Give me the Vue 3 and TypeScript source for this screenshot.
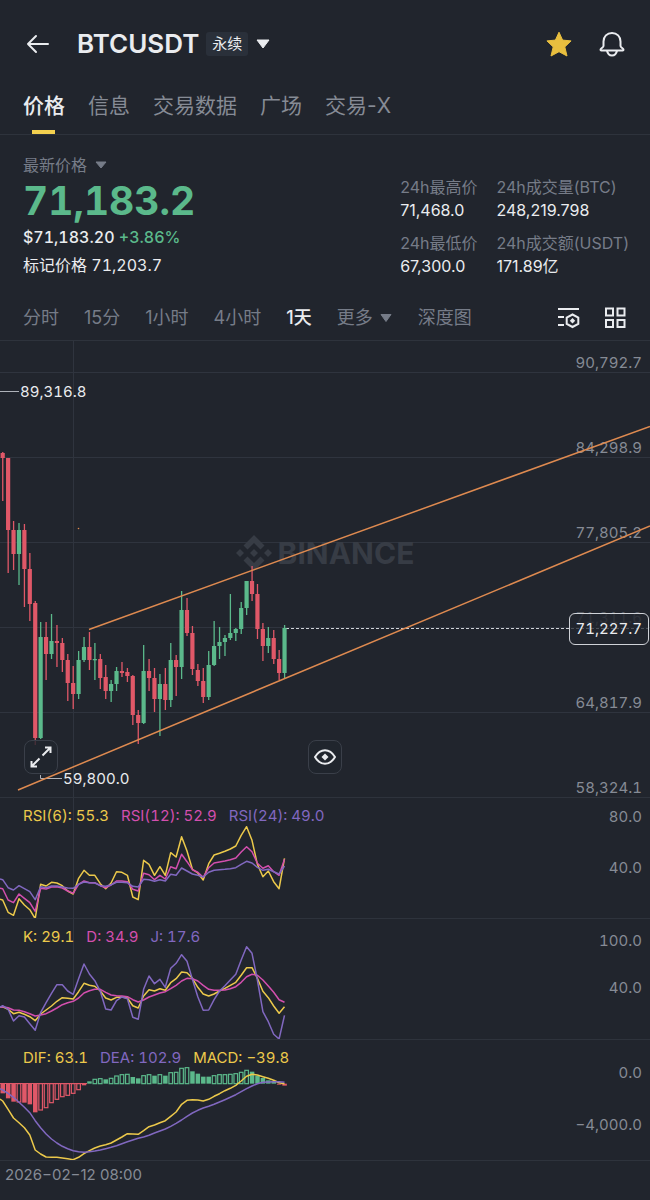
<script setup lang="ts">
import { ref } from 'vue'

interface Candle {
  x: number
  high: number
  low: number
  top: number
  bottom: number
  up: boolean
}
interface Bar {
  x: number
  y: number
  h: number
  up: boolean
  filled: boolean
}

const tabs: string[] = ['价格', '信息', '交易数据', '广场', '交易-X']
const activeTab = ref('价格')
const intervals: string[] = ['分时', '15分', '1小时', '4小时', '1天']
const activeInterval = ref('1天')

const stats: { label: string; value: string }[] = [
  { label: '24h最高价', value: '71,468.0' },
  { label: '24h成交量(BTC)', value: '248,219.798' },
  { label: '24h最低价', value: '67,300.0' },
  { label: '24h成交额(USDT)', value: '171.89亿' },
]

const STEP = 5.42
const xAt = (i: number): number => 2.7 + STEP * i

/* direction, high, low, body top, body bottom */
const rawCandles: [number, number, number, number, number][] = [
  [0, 111, 160, 112, 117], [0, 117, 232, 117, 189], [0, 180, 229, 189, 213], [1, 182, 244, 189, 213],
  [0, 183, 266, 189, 228], [0, 212, 280, 228, 263], [0, 260, 404, 262, 397], [1, 281, 398, 296, 397],
  [0, 281, 339, 296, 313], [1, 273, 318, 300, 313], [0, 284, 326, 300, 302], [0, 297, 331, 302, 319],
  [0, 313, 360, 319, 342], [0, 325, 368, 342, 353], [1, 310, 358, 319, 353], [1, 296, 321, 306, 319],
  [0, 291, 329, 306, 319], [1, 302, 339, 318, 319], [0, 313, 348, 318, 337], [0, 324, 358, 336, 350],
  [1, 339, 361, 343, 350], [1, 326, 350, 330, 343], [0, 321, 336, 330, 332], [0, 327, 341, 331, 335],
  [0, 334, 384, 335, 374], [0, 369, 403, 374, 382], [1, 304, 383, 330, 382], [0, 318, 350, 330, 337],
  [0, 327, 371, 337, 358], [1, 333, 395, 343, 358], [0, 327, 369, 343, 359], [1, 302, 366, 319, 359],
  [0, 314, 355, 319, 326], [1, 250, 338, 269, 326], [0, 257, 295, 269, 292], [0, 285, 334, 292, 328],
  [0, 323, 345, 329, 340], [0, 327, 362, 340, 356], [1, 310, 359, 324, 356], [1, 280, 325, 305, 324],
  [1, 286, 318, 301, 305], [1, 294, 315, 297, 301], [1, 253, 299, 292, 297], [1, 287, 300, 288, 292],
  [1, 261, 293, 267, 288], [1, 240, 274, 240, 267], [0, 225, 260, 240, 253], [0, 243, 298, 253, 288],
  [0, 282, 320, 288, 305], [1, 286, 312, 297, 305], [0, 289, 323, 297, 318], [0, 309, 339, 318, 332],
  [1, 284, 337, 287, 332],
]
const candles: Candle[] = rawCandles.map(([up, high, low, top, bottom], i) => ({
  x: xAt(i), high, low, top, bottom, up: up === 1,
}))

/* Turns samples, measured in thirds of a pixel, into polyline points. */
function line(samples: number[], lead: number, offset: number): string {
  const pts = samples.map((v, i) => `${xAt(i).toFixed(1)},${(v / 3 + offset).toFixed(1)}`)
  return [`0,${(lead / 3 + offset).toFixed(1)}`, ...pts].join(' ')
}

const rsi = [
  { cls: 'yellow', points: line([297, 334, 343, 293, 312, 326, 353, 250, 255, 244, 246, 254, 270, 279, 232, 208, 223, 223, 248, 263, 246, 212, 214, 223, 288, 296, 178, 190, 223, 197, 223, 155, 168, 107, 150, 205, 216, 237, 188, 162, 157, 151, 144, 135, 103, 77, 118, 190, 227, 210, 242, 263, 172], 295, 3) },
  { cls: 'pink', points: line([263, 297, 305, 279, 292, 305, 331, 262, 264, 258, 257, 261, 270, 277, 250, 240, 245, 245, 254, 260, 252, 240, 240, 242, 265, 270, 217, 221, 236, 223, 234, 197, 203, 160, 182, 206, 214, 229, 200, 186, 183, 180, 176, 171, 153, 137, 152, 187, 202, 194, 212, 223, 175], 262, 3) },
  { cls: 'purple', points: line([236, 260, 267, 254, 263, 272, 296, 257, 260, 255, 255, 258, 261, 262, 250, 243, 245, 246, 254, 256, 251, 244, 244, 245, 256, 258, 235, 236, 241, 236, 240, 220, 223, 201, 210, 219, 223, 228, 214, 208, 206, 205, 203, 200, 190, 181, 186, 199, 208, 205, 212, 219, 195], 234, 3) },
]
const kdj = [
  { cls: 'yellow', points: line([260, 268, 281, 277, 283, 290, 302, 282, 270, 258, 244, 233, 235, 237, 215, 190, 196, 199, 213, 234, 240, 232, 231, 234, 257, 264, 228, 209, 213, 206, 211, 188, 176, 156, 158, 175, 202, 222, 228, 222, 213, 205, 196, 187, 166, 143, 143, 175, 214, 233, 258, 280, 260], 261, 1) },
  { cls: 'pink', points: line([260, 263, 270, 271, 275, 281, 288, 285, 281, 273, 264, 254, 248, 244, 234, 219, 212, 208, 208, 217, 225, 227, 228, 230, 239, 246, 240, 231, 225, 219, 215, 206, 196, 183, 175, 176, 183, 196, 208, 211, 211, 210, 206, 200, 187, 170, 163, 166, 180, 198, 217, 239, 247], 261, 1) },
  { cls: 'purple', points: line([257, 268, 303, 287, 291, 311, 331, 278, 248, 220, 194, 194, 213, 223, 176, 132, 162, 182, 214, 267, 270, 242, 231, 236, 292, 298, 208, 168, 191, 178, 202, 145, 130, 104, 124, 178, 230, 271, 270, 239, 213, 197, 180, 163, 120, 80, 100, 180, 275, 305, 343, 357, 286], 261, 1) },
]
const macd = [
  { cls: 'yellow', points: line([183, 208, 234, 248, 263, 285, 330, 342, 351, 352, 352, 354, 356, 359, 352, 341, 332, 324, 318, 314, 309, 300, 291, 281, 282, 283, 272, 260, 255, 248, 242, 229, 216, 193, 181, 179, 180, 183, 178, 169, 161, 152, 145, 136, 123, 109, 103, 105, 110, 115, 121, 128, 131], 177, 0) },
  { cls: 'purple', points: line([150, 160, 172, 187, 202, 218, 242, 263, 282, 297, 309, 319, 326, 332, 335, 337, 335, 333, 330, 326, 322, 317, 311, 305, 300, 295, 291, 286, 279, 273, 267, 259, 250, 240, 229, 219, 211, 204, 199, 193, 186, 179, 172, 164, 155, 146, 138, 131, 127, 126, 125, 125, 127], 146, 0) },
]

/* histogram bar ends around the zero level; hollow ones are listed apart */
const barEnds: number[] = [160, 175, 185, 186, 188, 193, 217, 210, 203, 188, 178, 170, 166, 160, 149, 136, 124, 118, 116, 118, 115, 108, 104, 103, 111, 115, 107, 104, 107, 104, 107, 98, 97, 85, 83, 94, 101, 110, 110, 107, 104, 104, 103, 101, 97, 91, 95, 107, 114, 121, 124, 134, 137]
const hollow = new Set<number>([3, 7, 8, 9, 10, 11, 12, 13, 14, 17, 18, 20, 21, 22, 23, 26, 27, 29, 31, 32, 33, 34, 39, 40, 41, 42, 43, 44, 45])
const ZERO = 131
const bars: Bar[] = barEnds.map((end, i) => ({
  x: xAt(i),
  y: Math.min(end, ZERO) / 3,
  h: Math.max(Math.abs(end - ZERO) / 3, 1),
  up: end < ZERO,
  filled: !hollow.has(i),
}))
</script>

<template>
  <div class="page">
    <header class="top">
      <button class="icon" type="button" aria-label="返回">
        <svg width="30" height="26" viewBox="0 0 30 26"><path d="M14 5 6 13l8 8M6 13h20" fill="none" stroke="#eaecef" stroke-width="2" stroke-linecap="round" stroke-linejoin="round" /></svg>
      </button>
      <button class="symbol" type="button">
        <span class="pair">BTCUSDT</span>
        <span class="badge">永续</span>
        <svg width="16" height="10" viewBox="0 0 16 10"><path d="M2 1h12L8 9z" fill="#eaecef" stroke="#eaecef" stroke-linejoin="round" /></svg>
      </button>
      <button class="icon star" type="button" aria-label="收藏">
        <svg width="28" height="28" viewBox="0 0 28 28"><path d="M14 2.200l3.600 7.900 8.500.8-6.300 6 2.200 9.100-8-4.300L6 26l2.200-9.100-6.300-6 8.500-.8z" fill="#e9bf3f" stroke="#e9bf3f" stroke-linejoin="round" /></svg>
      </button>
      <button class="icon" type="button" aria-label="提醒">
        <svg width="28" height="28" viewBox="0 0 28 28"><g fill="none" stroke="#eaecef" stroke-width="2" stroke-linejoin="round"><path d="M14 3c-5 0-8.500 3.500-8.500 8.500V16c0 1.500-3 2.500-3 3.700 0 .5.300.8.800.8h21.400c.5 0 .8-.3.800-.8 0-1.200-3-2.200-3-3.700v-4.500C22.500 6.500 19 3 14 3z" /><path d="M9 20.500c.6 3.300 2.600 5 5 5s4.400-1.700 5-5" /></g></svg>
      </button>
    </header>

    <nav class="tabs">
      <button v-for="t in tabs" :key="t" type="button" :class="{ active: t === activeTab }" @click="activeTab = t">{{ t }}</button>
    </nav>

    <section class="quote">
      <div class="price">
        <button class="kind" type="button">最新价格
          <svg width="12" height="8" viewBox="0 0 12 8"><path d="M1 1h10L6 7z" fill="#767c88" stroke="#767c88" stroke-linejoin="round" /></svg>
        </button>
        <strong class="last">71,183.2</strong>
        <div class="fiat">$71,183.20 <span class="gain">+3.86%</span></div>
        <div class="mark">标记价格 71,203.7</div>
      </div>
      <dl class="stats">
        <div v-for="s in stats" :key="s.label">
          <dt>{{ s.label }}</dt>
          <dd>{{ s.value }}</dd>
        </div>
      </dl>
    </section>

    <div class="intervals">
      <button v-for="n in intervals" :key="n" type="button" :class="{ active: n === activeInterval }" @click="activeInterval = n">{{ n }}</button>
      <button type="button">更多
        <svg width="14" height="10" viewBox="0 0 14 10"><path d="M2 1.500h10L7 8.500z" fill="#767c88" stroke="#767c88" stroke-linejoin="round" /></svg>
      </button>
      <button type="button">深度图</button>
      <div class="tools">
        <button class="icon" type="button" aria-label="指标设置">
          <svg width="24" height="24" viewBox="0 0 24 24"><g fill="none" stroke="#eaecef" stroke-width="2"><path d="M1 3h21M1 11h6M1 19h6M15.500 8.500l5.800 3.100v6.300l-5.800 3.100-5.800-3.100v-6.300z" /></g><path d="M15.500 12l2.700 2.800-2.700 2.700-2.700-2.700z" fill="#eaecef" /></svg>
        </button>
        <button class="icon" type="button" aria-label="布局">
          <svg width="24" height="24" viewBox="0 0 24 24"><path d="M3 2.500h7v7H3zM14.500 2.500h7v7h-7zM3 14h7v7H3zM14.500 14h7v7h-7z" fill="none" stroke="#eaecef" stroke-width="2" /></svg>
        </button>
      </div>
    </div>

    <main>
      <section class="panel main-chart">
        <svg class="plot" width="100%" height="100%">
          <g class="grid">
            <line v-for="y in [31.5, 116.5, 201.5, 286.5, 371.5]" :key="y" x1="0" x2="100%" :y1="y" :y2="y" />
            <line x1="73.500" x2="73.500" y1="0" y2="100%" />
          </g>
        </svg>
        <div class="watermark">
          <svg width="36" height="36" viewBox="0 0 36 36"><path d="M18 0l10.500 10.500-4 4L18 8l-6.500 6.500-4-4zM4 14l4 4-4 4-4-4zM32 14l4 4-4 4-4-4zM18 14l4 4-4 4-4-4zM7.500 25.500l4-4L18 28l6.500-6.500 4 4L18 36z" fill="currentColor" /></svg>
          <span>BINANCE</span>
        </div>
        <ul class="scale">
          <li>90,792.7</li><li>84,298.9</li><li>77,805.2</li><li class="faded">71,311.6</li><li>64,817.9</li><li>58,324.1</li>
        </ul>
        <svg class="plot" width="100%" height="100%">
          <line x1="286" x2="100%" y1="287.500" y2="287.500" class="now" />
          <g v-for="(c, i) in candles" :key="i" :class="c.up ? 'up' : 'down'">
            <rect :x="c.x - 0.6" :y="c.high" width="1.3" :height="c.low - c.high" />
            <rect :x="c.x - 2.1" :y="c.top" width="4.2" :height="Math.max(c.bottom - c.top, 1.3)" />
          </g>
          <path class="pointer" d="M0 50.500h19M40.500 434v3.500H62" />
          <path class="trend" d="M89 288.500 650 85.500M18 449 650 185" />
          <circle cx="78.500" cy="187.500" r="0.8" fill="#de8a50" />
        </svg>
        <span class="extreme high">89,316.8</span>
        <span class="extreme low">59,800.0</span>
        <span class="tag">71,227.7</span>
        <button class="float expand" type="button" aria-label="全屏">
          <svg width="22" height="22" viewBox="0 0 22 22"><path d="M12.500 9.500l8-8M15 1.500h5.500V7M9.500 12.500l-8 8M1.500 15v5.500H7" fill="none" stroke="#eaecef" stroke-width="2" /></svg>
        </button>
        <button class="float eye" type="button" aria-label="显示">
          <svg width="24" height="20" viewBox="0 0 24 20"><path d="M2 10c5.500-9 14.500-9 20 0-5.500 9-14.500 9-20 0z" fill="none" stroke="#eaecef" stroke-width="2" stroke-linejoin="round" /><path d="M12 6.500l3.500 3.500-3.500 3.500L8.500 10z" fill="#eaecef" /></svg>
        </button>
      </section>

      <section class="panel">
        <svg class="plot" width="100%" height="100%">
          <line class="cross" x1="73.500" x2="73.500" y1="0" y2="100%" />
          <polyline v-for="s in rsi" :key="s.cls" :class="s.cls" :points="s.points" />
        </svg>
        <div class="legend"><span class="yellow">RSI(6): 55.3</span><span class="pink">RSI(12): 52.9</span><span class="purple">RSI(24): 49.0</span></div>
        <ul class="scale rsi-scale"><li>80.0</li><li>40.0</li></ul>
      </section>

      <section class="panel">
        <svg class="plot" width="100%" height="100%">
          <line class="cross" x1="73.500" x2="73.500" y1="0" y2="100%" />
          <polyline v-for="s in kdj" :key="s.cls" :class="s.cls" :points="s.points" />
        </svg>
        <div class="legend"><span class="yellow">K: 29.1</span><span class="pink">D: 34.9</span><span class="purple">J: 17.6</span></div>
        <ul class="scale kdj-scale"><li>100.0</li><li>40.0</li></ul>
      </section>

      <section class="panel">
        <svg class="plot" width="100%" height="100%">
          <line class="cross" x1="73.500" x2="73.500" y1="0" y2="100%" />
          <template v-for="(b, i) in bars" :key="i">
            <rect v-if="b.filled" :class="b.up ? 'up' : 'down'" :x="b.x - 2.2" :y="b.y" width="4.500" :height="b.h" />
            <rect v-else :class="['hollow', b.up ? 'up' : 'down']" :x="b.x - 1.8" :y="b.y" width="3.600" :height="b.h" />
          </template>
          <path d="M0 43.500h87" stroke="#e05868" />
          <polyline v-for="s in macd" :key="s.cls" :class="s.cls" :points="s.points" />
        </svg>
        <div class="legend"><span class="yellow">DIF: 63.1</span><span class="purple">DEA: 102.9</span><span class="yellow">MACD: −39.8</span></div>
        <ul class="scale macd-scale"><li>0.0</li><li>−4,000.0</li></ul>
      </section>
    </main>
    <footer class="time">2026−02−12 08:00</footer>
  </div>
</template>

<style>
body {
  background: #21252d;
}
</style>

<style scoped>
.page {
  min-height: 100vh;
  box-sizing: border-box;
  overflow: hidden;
  background: #21252d;
  color: #eaecef;
  font: 16px/24px Inter, "Noto Sans CJK SC", sans-serif;
}
button {
  padding: 0;
  border: 0;
  background: none;
  color: inherit;
  font: inherit;
  white-space: nowrap;
  cursor: pointer;
}
svg {
  display: block;
  flex: none;
}
.icon {
  display: flex;
}
.top {
  display: flex;
  align-items: center;
  height: 88px;
  padding: 0 24px 0 22px;
}
.symbol {
  display: flex;
  align-items: center;
  margin-left: 25px;
}
.pair {
  font-size: 26px;
  line-height: 32px;
  font-weight: 600;
}
.badge {
  margin: 0 7px;
  padding: 0 6px;
  border-radius: 3px;
  background: #2a303a;
  font-size: 15px;
  line-height: 24px;
}
.star {
  margin: 0 25px 0 auto;
}
.tabs {
  display: flex;
  gap: 23px;
  height: 46px;
  padding: 0 23px;
  border-bottom: 1px solid #2e333c;
  color: #868b95;
  font-size: 21px;
}
.tabs button {
  position: relative;
  padding-bottom: 10px;
}
.tabs .active {
  color: #eaecef;
  font-weight: 500;
}
.tabs .active::after {
  content: "";
  position: absolute;
  left: 50%;
  bottom: 0;
  width: 23px;
  height: 4px;
  margin-left: -12px;
  background: #f3d04f;
}
.quote {
  display: flex;
  justify-content: space-between;
  padding: 18px 21px 0 23px;
}
.price,
.panel {
  font-variant-numeric: tabular-nums;
}
.kind {
  display: flex;
  align-items: center;
  gap: 8px;
  color: #767c88;
}
.last {
  display: block;
  font-size: 39px;
  line-height: 48px;
  color: #5bb98b;
}
.fiat {
  font-weight: 500;
}
.gain {
  color: #5bb98b;
}
.mark {
  margin-top: 4px;
}
.stats {
  display: grid;
  grid-template-columns: auto auto;
  gap: 10px 19px;
  margin: 23px 0 0;
}
.stats dt {
  line-height: 23px;
  color: #767c88;
}
.stats dd {
  margin: 0;
  line-height: 22px;
}
.intervals {
  display: flex;
  align-items: center;
  gap: 25px;
  height: 45px;
  padding: 18px 23px 0;
  border-bottom: 1px solid #2e333c;
  color: #767c88;
  font-size: 18px;
}
.intervals button {
  display: flex;
  align-items: center;
  gap: 6px;
}
.intervals .active {
  color: #eaecef;
  font-weight: 500;
}
.tools {
  display: flex;
  gap: 22px;
  margin-left: auto;
}
.panel {
  position: relative;
  height: 120px;
  border-bottom: 1px solid #2e333c;
  font-size: 15px;
}
.main-chart {
  height: 456px;
}
.plot {
  position: absolute;
  inset: 0;
}
.grid line,
.cross {
  stroke: #2f343e;
}
.up {
  fill: #5bb98b;
  stroke: #5bb98b;
  stroke-width: 0;
}
.down {
  fill: #e05868;
  stroke: #e05868;
  stroke-width: 0;
}
.hollow {
  fill: none;
  stroke-width: 1.2;
}
.now {
  stroke: #cfd2d7;
  stroke-dasharray: 3 2;
}
.pointer {
  fill: none;
  stroke: #aeb2b9;
}
.trend {
  fill: none;
  stroke: #de8a50;
  stroke-width: 1.5;
}
polyline {
  fill: none;
  stroke-width: 1.5;
  stroke-linejoin: round;
}
polyline.yellow {
  stroke: #ecc94b;
}
polyline.pink {
  stroke: #d34fae;
}
polyline.purple {
  stroke: #8168c0;
}
.watermark {
  position: absolute;
  top: 194px;
  left: 0;
  right: 0;
  display: flex;
  align-items: center;
  justify-content: center;
  gap: 6px;
  color: #373c45;
  font-size: 30px;
  line-height: 36px;
  font-weight: 700;
}
.scale {
  position: absolute;
  top: 10px;
  right: 8px;
  display: grid;
  grid-auto-rows: 85px;
  margin: 0;
  padding: 0;
  list-style: none;
  text-align: right;
  color: #868b95;
}
.faded {
  opacity: 0.5;
}
.rsi-scale {
  top: 7px;
  grid-auto-rows: 51px;
}
.kdj-scale {
  grid-auto-rows: 47px;
}
.macd-scale {
  top: 21px;
  grid-auto-rows: 52px;
}
.extreme {
  position: absolute;
}
.high {
  top: 39px;
  left: 20px;
}
.low {
  top: 426px;
  left: 63px;
}
.tag {
  position: absolute;
  top: 272px;
  right: 1px;
  padding: 3px 6px;
  border: 1px solid #cfd2d7;
  border-radius: 6px;
  background: #21252dbf;
}
.float {
  position: absolute;
  bottom: 23px;
  display: grid;
  place-items: center;
  width: 34px;
  height: 34px;
  border: 1px solid #3a3f49;
  border-radius: 8px;
  background: #21252dcc;
}
.expand {
  left: 24px;
}
.eye {
  left: 50%;
  margin-left: -17px;
}
.legend {
  position: relative;
  display: flex;
  gap: 12px;
  padding: 6px 23px 0;
}
.legend .yellow {
  color: #ecc94b;
}
.legend .pink {
  color: #d34fae;
}
.legend .purple {
  color: #8168c0;
}
.time {
  padding: 2px 5px 0;
  color: #868b95;
  font-size: 15px;
}
</style>
